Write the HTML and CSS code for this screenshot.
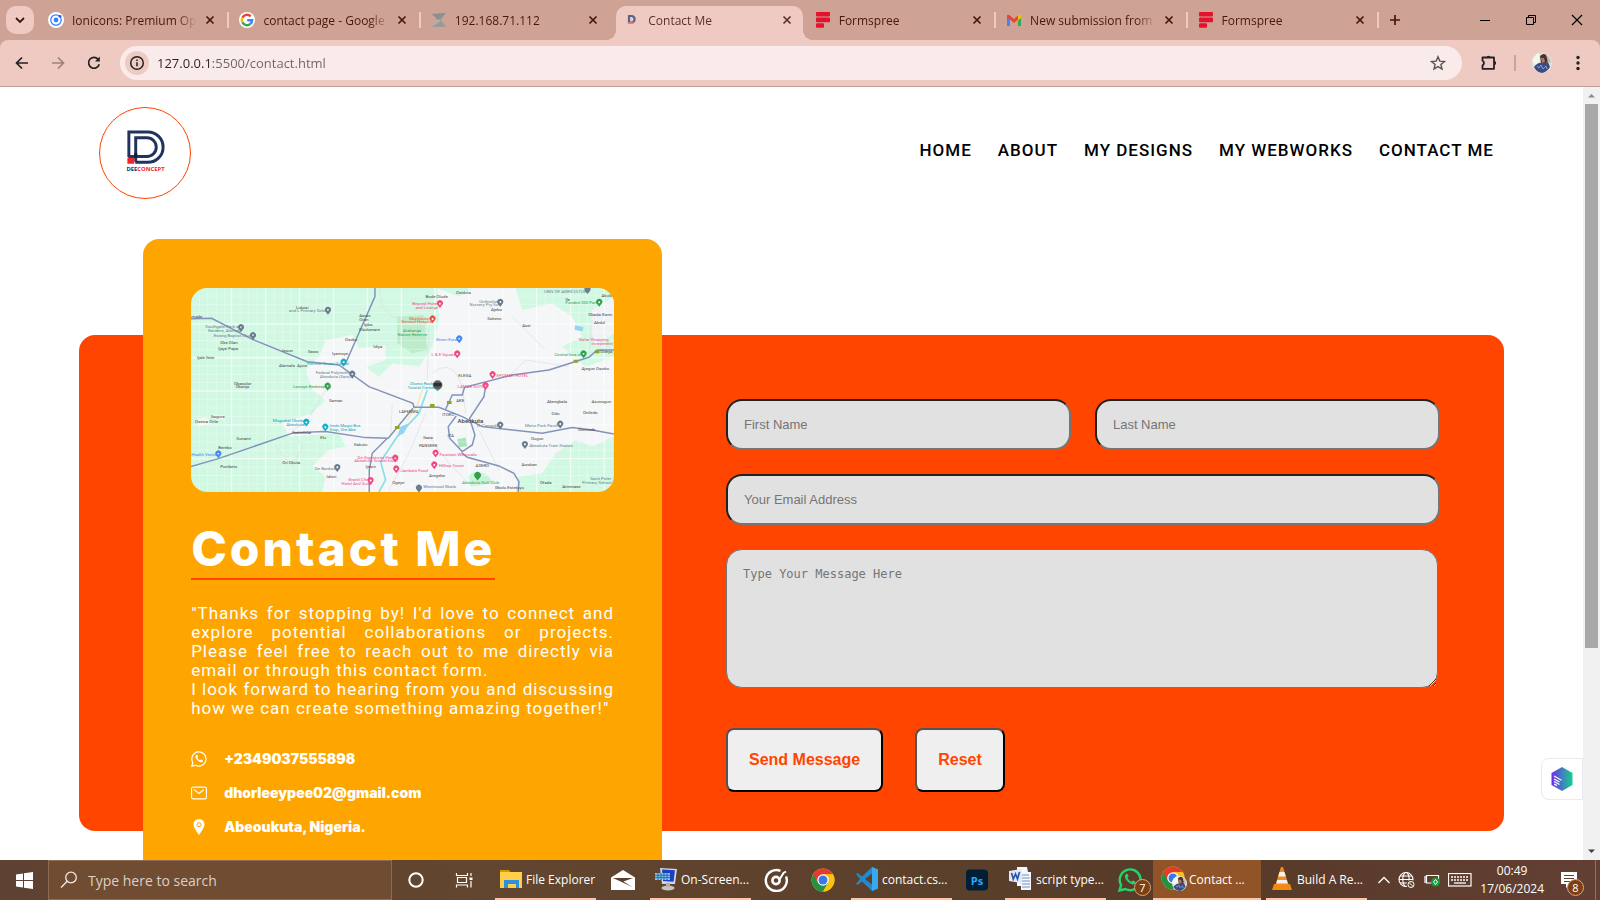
FILE: index.html
```html
<!DOCTYPE html>
<html lang="en">
<head>
<meta charset="utf-8">
<title>Contact Me</title>
<link rel="stylesheet" href="styles.css">
</head>
<body>
<svg class="defs" aria-hidden="true">
  <symbol id="i-x" viewBox="0 0 10 10"><path d="M1.5 1.5l7 7M8.500 1.500l-7 7" stroke="currentColor" stroke-width="1.7" fill="none"/></symbol>
  <symbol id="i-form" viewBox="0 0 16 16"><g fill="#e5122e"><rect x="1" y="0" width="14" height="4.600" rx="1"/><rect x="1" y="5.600" width="14" height="4.600" rx="1"/><rect x="1" y="11.200" width="8" height="4.600" rx="1"/></g></symbol>
  <symbol id="i-chrome" viewBox="0 0 48 48"><circle cx="24" cy="24" r="23" fill="#fbc116"/><path d="M24 24L4.100 12.500A23 23 0 0 1 43.900 12.500H24z" fill="#e33b2e"/><path d="M24 24L4.100 12.500A23 23 0 0 0 24 47L34 30z" fill="#229342"/><path d="M24 12.500H43.900A23 23 0 0 1 24 47L34 30z" fill="#fbc116"/><path d="M4.100 12.500L14 29.700L24 13z" fill="#e33b2e"/><circle cx="24" cy="24" r="11.500" fill="#fff"/><circle cx="24" cy="24" r="9" fill="#3b78e7"/></symbol>
  <symbol id="i-face" viewBox="0 0 20 20"><circle cx="10" cy="10" r="10" fill="#dfe6dc"/><path d="M0 8q2-6 7-8l1 8-5 4z" fill="#f4f7ee"/><path d="M8 3q4-4 7 0l1 5-3 3-4-1z" fill="#4b3030"/><path d="M9 5l3 0 1 4-3 1z" fill="#b07a68"/><path d="M2 14q4-5 9-4l5-1 2 5q-3 5-8 6-6-1-8-6z" fill="#3c4b82"/><path d="M5 13l2 2 2-3 2 4 3-3 1 3" stroke="#8fa0cc" fill="none"/><path d="M14 2q4 2 5 8l-3-1z" fill="#c9b6ae"/></symbol>
</svg>

<header class="chrome">
  <div class="tabstrip">
    <button class="tab-search" aria-label="Search tabs"><svg viewBox="0 0 12 12" width="12" height="12"><path d="M2 4l4 4 4-4" fill="none" stroke="#3a1613" stroke-width="1.800"/></svg></button>
    <div class="tabs">
      <div class="tab"><svg class="fav" viewBox="0 0 16 16"><circle cx="8" cy="8" r="8" fill="#fff"/><circle cx="8" cy="8" r="5.200" fill="none" stroke="#3880ff" stroke-width="1.300"/><circle cx="8" cy="8" r="2.400" fill="#3880ff"/><circle cx="12" cy="4.300" r="1.400" fill="#1c5bff"/></svg><span class="tab-title">Ionicons: Premium Ope</span><button class="tab-close" aria-label="Close tab"><svg><use href="#i-x"/></svg></button></div>
      <div class="tab"><svg class="fav" viewBox="0 0 16 16"><circle cx="8" cy="8" r="8" fill="#fff"/><g fill="none" stroke-width="2.400"><path d="M11.700 4.300A5.200 5.200 0 0 0 3.400 5.600" stroke="#ea4335"/><path d="M3.400 5.600A5.200 5.200 0 0 0 3.400 10.400" stroke="#fbbc05"/><path d="M3.400 10.400A5.200 5.200 0 0 0 11.300 12" stroke="#34a853"/><path d="M11.300 12A5.200 5.200 0 0 0 13.200 8.200H8.200" stroke="#4285f4"/></g></svg><span class="tab-title">contact page - Google</span><button class="tab-close" aria-label="Close tab"><svg><use href="#i-x"/></svg></button></div>
      <div class="tab no-sep"><svg class="fav" viewBox="0 0 16 16"><path d="M1 2l14-1-5 7 5 7-14 0 6-7z" fill="#9b9b9b"/><path d="M1 2l6 6 8-7z" fill="#8a8f90"/><path d="M7 8l-6 7 9-7z" fill="#b5b5b5"/></svg><span class="tab-title">192.168.71.112</span><button class="tab-close" aria-label="Close tab"><svg><use href="#i-x"/></svg></button></div>
      <div class="tab active"><svg class="fav" viewBox="0 0 16 16"><path d="M5 4h3a3.400 3.400 0 0 1 0 6.600H5z" fill="none" stroke="#5b628c" stroke-width="2.200"/><path d="M4 11h6" stroke="#e58a88" stroke-width="1.500"/></svg><span class="tab-title">Contact Me</span><button class="tab-close" aria-label="Close tab"><svg><use href="#i-x"/></svg></button></div>
      <div class="tab"><svg class="fav"><use href="#i-form"/></svg><span class="tab-title">Formspree</span><button class="tab-close" aria-label="Close tab"><svg><use href="#i-x"/></svg></button></div>
      <div class="tab"><svg class="fav" viewBox="0 0 16 16"><path d="M1 4v10h3V6z" fill="#4285f4"/><path d="M15 4v10h-3V6z" fill="#34a853"/><path d="M12 4l3-1.500V6l-3 2.500z" fill="#fbbc04"/><path d="M1 3.500Q2 2 4 3.500L8 7l4-3.500v4L8 11 4 7.500 1 5.500z" fill="#ea4335"/><path d="M12 3.500q2-1.500 3 0v2l-3 2z" fill="#fbbc04"/></svg><span class="tab-title">New submission from</span><button class="tab-close" aria-label="Close tab"><svg><use href="#i-x"/></svg></button></div>
      <div class="tab"><svg class="fav"><use href="#i-form"/></svg><span class="tab-title">Formspree</span><button class="tab-close" aria-label="Close tab"><svg><use href="#i-x"/></svg></button></div>
    </div>
    <button class="new-tab" aria-label="New tab"><svg viewBox="0 0 12 12" width="12" height="12"><path d="M6 1v10M1 6h10" stroke="#4a1511" stroke-width="1.700"/></svg></button>
    <div class="win-buttons">
      <button aria-label="Minimize"><svg viewBox="0 0 12 12" width="12" height="12"><path d="M1 6.500h10" stroke="#000"/></svg></button>
      <button aria-label="Restore"><svg viewBox="0 0 12 12" width="12" height="12"><path d="M1.500 3.500h7v7h-7zM3.500 3.500v-2h7v7h-2" fill="none" stroke="#000"/></svg></button>
      <button aria-label="Close"><svg viewBox="0 0 12 12" width="12" height="12"><path d="M1 1l10 10M11 1L1 11" stroke="#000" stroke-width="1.200"/></svg></button>
    </div>
  </div>
  <div class="toolbar">
    <button class="tool" aria-label="Back"><svg viewBox="0 0 16 16" width="16" height="16"><path d="M14 8H3M8 2.500L2.500 8 8 13.500" fill="none" stroke="#222" stroke-width="1.700"/></svg></button>
    <button class="tool" aria-label="Forward"><svg viewBox="0 0 16 16" width="16" height="16"><path d="M2 8h11M8 2.500L13.500 8 8 13.500" fill="none" stroke="#9c827d" stroke-width="1.700"/></svg></button>
    <button class="tool" aria-label="Reload"><svg viewBox="0 0 16 16" width="16" height="16"><path d="M13.200 9.200A5.400 5.400 0 1 1 12 4.200" fill="none" stroke="#222" stroke-width="1.700"/><path d="M13.800 1.500v5H9z" fill="#222"/></svg></button>
    <div class="omnibox">
      <button class="site-info" aria-label="View site information"><svg viewBox="0 0 16 16" width="16" height="16"><circle cx="8" cy="8" r="6.300" fill="none" stroke="#222" stroke-width="1.500"/><path d="M8 7.200v4M8 4.400v1.600" stroke="#222" stroke-width="1.500"/></svg></button>
      <input class="url" type="text" aria-label="Address" value="127.0.0.1:5500/contact.html">
      <button class="star" aria-label="Bookmark"><svg viewBox="0 0 16 16" width="16" height="16"><path d="M8 1.800l1.800 4.300 4.700.4-3.600 3 1.100 4.600L8 11.600l-4 2.500 1.100-4.600-3.600-3 4.700-.4z" fill="none" stroke="#555" stroke-width="1.400"/></svg></button>
    </div>
    <div class="tool-right">
      <button class="tool" aria-label="Extensions"><svg viewBox="0 0 18 18" width="18" height="18"><path d="M2.500 3.500H14V14.800H2.500V11.500Q5.500 9.200 2.500 6.500z" fill="none" stroke="#222" stroke-width="1.800" stroke-linejoin="round"/><path d="M6.300 3.500a2.300 2.300 0 0 1 4.400 0zM14.500 6.800a2.300 2.300 0 0 1 0 4.400z" fill="#222"/></svg></button>
      <span class="tool-sep"></span>
      <button class="avatar" aria-label="Profile"><svg width="20" height="20"><use href="#i-face"/></svg></button>
      <button class="dots" aria-label="Menu"><svg viewBox="0 0 4 16" width="4" height="16"><g fill="#222"><circle cx="2" cy="2.500" r="1.700"/><circle cx="2" cy="8" r="1.700"/><circle cx="2" cy="13.500" r="1.700"/></g></svg></button>
    </div>
  </div>
</header>

<div class="viewport">
<main class="page">
  <div class="site-header">
    <a class="logo" href="#" aria-label="Deeconcept home"><svg viewBox="0 0 92 92" width="90" height="90">
      <g fill="none" stroke="#21325e" stroke-width="3"><path d="M29.500 50V24.500H49a14.500 14.500 0 0 1 0 31H36"/><path d="M36.500 55V30.500H48a9.500 9.500 0 0 1 0 19H29"/></g>
      <path d="M28 51h7v6h-7z" fill="#f4232b"/><path d="M35 46h3v5h-3z" fill="#131a30"/>
      <text x="27" y="64" class="logo-text"><tspan fill="#21325e">DEE</tspan><tspan fill="#f4232b">CONCEPT</tspan></text></svg></a>
    <nav class="nav"><a href="#">HOME</a><a href="#">ABOUT</a><a href="#">MY DESIGNS</a><a href="#">MY WEBWORKS</a><a href="#">CONTACT ME</a></nav>
  </div>

  <section class="contact">
    <div class="panel"></div>
    <article class="card">
      <svg class="map" viewBox="36 24 1269 612" preserveAspectRatio="xMidYMid slice" role="img" aria-label="Map of Abeokuta">
        <rect x="36" y="24" width="1269" height="612" fill="#d0f8e2"/>
        <path d="M775 24L840 50 880 24H1010L1030 90 1120 70 1180 110 1210 170 1150 200 1220 260 1305 230V470L1240 500 1190 480 1130 520 1090 580 1020 590 1010 636H430L440 590 400 560 450 510 500 500 480 460 330 470 310 430 400 400 440 360 400 330 380 270 420 230 440 180 520 165 540 205 620 195 620 240 560 260 600 290 640 250 720 260 760 200 780 120z" fill="#f5f6f7"/>
        <path d="M1240 90L1305 50V160L1250 200 1235 150z" fill="#f0f3f5"/>
        <path d="M50 420l30-10 20 20-40 10zM100 405l30 0 10 12-30 4z" fill="#f0f6f4"/>
        <path d="M655 110L735 105 745 210 700 220 655 190z" fill="#bdeccb"/>
        <path d="M865 590q20-25 60-5l20 25-70 10z" fill="#c9f3d9"/><path d="M835 478l25-5 5 25-25 5z" fill="#a8e5bd"/>
        <g stroke="#fff" fill="none" opacity=".65"><path d="M36 132H1305M36 233H1305M36 333H1305M36 435H1305M36 536H1305M158 24V636M260 24V636M362 24V636M464 24V636M565 24V636M667 24V636M768 24V636M870 24V636M971 24V636M1073 24V636M1175 24V636M1276 24V636" stroke-width="4"/><path d="M36 48H1305M36 73H1305M36 98H1305M36 157H1305M36 182H1305M36 208H1305M36 258H1305M36 283H1305M36 308H1305M36 358H1305M36 384H1305M36 410H1305M36 460H1305M36 486H1305M36 511H1305M36 561H1305M36 587H1305M36 612H1305M61 24V636M86 24V636M112 24V636M137 24V636M183 24V636M208 24V636M234 24V636M285 24V636M311 24V636M336 24V636M387 24V636M413 24V636M438 24V636M1099 24V636M1124 24V636M1200 24V636M1226 24V636M1251 24V636" stroke-width="1.500"/><path d="M36 233H1305M768 24V636" stroke-width="5"/></g>
        <g fill="none" stroke="#d9dfe5" stroke-width="2"><path d="M600 24L610 80 640 110 700 120 750 150 745 300M760 280q60-50 90 40l10 80M740 400l-50 120-60 110M750 470l60 80 60 60M640 370l-5 100M980 300l60-60 130 20M440 330L380 430M290 500l50 60 30-60-30-50 60-30"/><path d="M1240 120l-10 100M900 450l60 120M1000 110l100 100"/></g>
        <path d="M745 330L720 400 655 470 605 545 620 600 600 636" fill="none" stroke="#86dfe9" stroke-width="5"/><path d="M665 440l25-10-15 30-20 10zM1188 136l26 6-4 12-22-4z" fill="#92d5f1"/>
        <path d="M730 330l-15 45-30 45" fill="none" stroke="#f3e7b6" stroke-width="4"/>
        <g fill="none" stroke="#8493b9" stroke-width="4.500"><path d="M36 116L98 115 220 178 385 245 480 255 570 320 702 370 705 382 780 382 850 410 910 440 1090 460 1180 443 1240 450 1305 462"/><path d="M588 24V50L500 250"/><path d="M36 560L118 536 345 458 440 455 560 473 628 475 702 385"/><path d="M625 475L580 520 571 570V636"/><path d="M800 388L820 345H850L857 322 1000 285 1110 270 1230 232 1255 210H1305"/><path d="M920 320L915 350 872 415 888 465 880 495 850 515 812 475 808 440 832 408"/><path d="M848 518L865 532 960 558 1005 580 1020 605 1018 636"/></g>
        <g fill="#93a51f"><path d="M753 372h14v9h-14zM804 363h14v9h-14zM648 438h14v9h-14zM1184 239h14v9h-14zM1248 211h14v9h-14z"/></g>
        <g class="pins">
          <g fill="#6b7c8c"><path id="pin" d="M447 104l-7-9a9 9 0 1 1 14 0z"/><use href="#pin" x="-261" y="52"/><use href="#pin" x="-225" y="76"/><use href="#pin" x="73" y="192"/><use href="#pin" x="517" y="-24"/><use href="#pin" x="517" y="345"/><use href="#pin" x="697" y="342"/><use href="#pin" x="591" y="403"/><use href="#pin" x="28" y="472"/><use href="#pin" x="273" y="534"/><use href="#pin" x="779" y="-62"/></g>
          <g fill="#ee4b83"><path d="M783 84l-7-9a9 9 0 1 1 14 0zM835 235l-7-9a9 9 0 1 1 14 0zM941 297l-7-9a9 9 0 1 1 14 0zM920 330l-7-9a9 9 0 1 1 14 0zM770 533l-7-9a9 9 0 1 1 14 0zM766 568l-7-9a9 9 0 1 1 14 0zM649 548l-7-9a9 9 0 1 1 14 0zM652 580l-7-9a9 9 0 1 1 14 0zM575 615l-7-9a9 9 0 1 1 14 0z"/></g>
          <path d="M761 130l-7-9a9 9 0 1 1 14 0z" fill="#f0524b"/>
          <path d="M841 190l-7-9a9 9 0 1 1 14 0zM118 535l-7-9a9 9 0 1 1 14 0z" fill="#4285f4"/>
          <path d="M494 260l-7-9a9 9 0 1 1 14 0zM382 440l-7-9a9 9 0 1 1 14 0zM439 455l-7-9a9 9 0 1 1 14 0zM776 334l-14-12h28z" fill="#16b0c4"/>
          <path d="M446 332l-7-9a9 9 0 1 1 14 0zM1261 80l-7-9a9 9 0 1 1 14 0zM1214 235l-7-9a9 9 0 1 1 14 0zM896 602l-8-10a10 10 0 1 1 16 0z" fill="#34a04f"/>
          <circle cx="776" cy="315" r="14" fill="#5c5a58" stroke="#9fb5b5" stroke-width="2"/><path d="M764 309h24v10h-24z" fill="#2f2d2d"/>
          <g fill="#fff"><circle cx="447" cy="90" r="3"/><circle cx="186" cy="142" r="3"/><circle cx="222" cy="166" r="3"/><circle cx="520" cy="282" r="3"/><circle cx="964" cy="66" r="3"/><circle cx="964" cy="435" r="3"/><circle cx="1144" cy="432" r="3"/><circle cx="1038" cy="493" r="3"/><circle cx="475" cy="562" r="3"/><circle cx="783" cy="71" r="3"/><circle cx="761" cy="117" r="3"/><circle cx="841" cy="177" r="3"/><circle cx="835" cy="222" r="3"/><circle cx="941" cy="284" r="3"/><circle cx="920" cy="317" r="3"/><circle cx="494" cy="247" r="3"/><circle cx="446" cy="319" r="3"/><circle cx="382" cy="427" r="3"/><circle cx="439" cy="442" r="3"/><circle cx="118" cy="522" r="3"/><circle cx="770" cy="520" r="3"/><circle cx="766" cy="555" r="3"/><circle cx="649" cy="535" r="3"/><circle cx="652" cy="567" r="3"/><circle cx="575" cy="602" r="3"/><circle cx="1261" cy="67" r="3"/><circle cx="1214" cy="222" r="3"/></g>
        </g>
        <g class="map-text">
          <text x="351" y="86">Lukosi</text><text x="541" y="110">Aaran</text><text x="541" y="123">Oran</text><text x="555" y="139">Igbo</text><text x="541" y="152">Elodumare</text><text x="498" y="183">Osoku</text><text x="583" y="203">Idiya</text><text x="124" y="192">Oke Olan</text><text x="118" y="211">Ijaye Papa</text><text x="54" y="238">Ijale Ilete</text><text x="37" y="113">made</text><text x="310" y="217">Isoun</text><text x="387" y="218">Ilawo</text><text x="459" y="226">Iyamoye</text><text x="300" y="262">Alamala&#160; Ajura</text><text x="165" y="314">Obasolor</text><text x="170" y="325">Obanja</text><text x="450" y="366">Saman</text><text x="96" y="413">Itagura</text><text x="48" y="429">Osewa Orile</text><text x="172" y="480">Sunami</text><text x="118" y="508">Bereko</text><text x="340" y="461">Ibatedelar</text><text x="424" y="477">Elu</text><text x="525" y="497">Ifakutu</text><text x="124" y="563">Poniketu</text><text x="310" y="553">Ori Okuta</text><text x="443" y="594">Idiori</text><text x="740" y="55">Bode Olude</text><text x="831" y="43">Osiduta</text><text x="936" y="94">Ajebo</text><text x="925" y="119">Sokenu</text><text x="1030" y="141">Asei</text><text x="1228" y="108">Obada Gomi</text><text x="1245" y="131">Abdul</text><text x="1268" y="50">Akule</text><text x="1160" y="62">Ile</text><text x="1208" y="270">Ajegun Osotto</text><text x="1104" y="369">Akeegbala</text><text x="1238" y="368">Asunogun</text><text x="1118" y="405">Odo</text><text x="1212" y="401">Oniledo</text><text x="1197" y="453">Olomode</text><text x="1056" y="481">Ougun</text><text x="1028" y="557">Awokan</text><text x="1083" y="613">Ofada</text><text x="1150" y="625">Arinmase</text><text x="948" y="627">Gbolu Estetuyu</text><text x="750" y="592">Aregebe</text><text x="640" y="613">Ogeyn</text><text x="560" y="565">Ijesin</text><text x="733" y="478">Ibara</text><text x="720" y="500">PANSEKE</text><text x="660" y="398">LAFENWA</text><text x="790" y="407">ITOKU</text><text x="832" y="367">AKE</text><text x="838" y="290">ELEGA</text><text x="890" y="560">ASERO</text><text x="806" y="472">ITA</text><text x="1264" y="219">Odeya</text>
          <text x="836" y="429" class="city">Abeokuta</text>
          <g fill="#6b7c8c"><text x="330" y="97">and L Primary School</text><text x="79" y="143">Southgate Park and</text><text x="86" y="155">Gardens, Alamala</text><text x="104" y="170">Ewang Baptist Church</text><text x="410" y="281">Federal Polytechnic</text><text x="422" y="293">Abeokuta (Ilaro)</text><text x="901" y="68">Unfinished</text><text x="872" y="79">Nursery Pry Sch</text><text x="894" y="442">O. Campdila</text><text x="1038" y="440">Metro Park Pacific</text><text x="1051" y="500">Abeokuta Train Station</text><text x="408" y="570">De Banksia</text><text x="733" y="625">Westwood Gbala</text><text x="1234" y="600">Saint Peter</text><text x="1210" y="611">Primary School</text><text x="1095" y="38">UNIV OF AGRICULTURE</text></g>
          <g fill="#ee4b83"><text x="700" y="75">Beyond Hotel</text><text x="710" y="86">and Lounge</text><text x="758" y="228">L &amp; E Square</text><text x="953" y="290">EPOMAK HOTEL</text><text x="836" y="323">LAMAR SUITES</text><text x="782" y="528">Fountain Wuruwala</text><text x="780" y="561">Hilltop Tower</text><text x="536" y="536">De-Signatures Hotel</text><text x="526" y="547">Abeokuta Sunset hotel</text><text x="664" y="575">Jambalo Food</text><text x="508" y="602">Grand Chin</text><text x="488" y="614">Hotel And Suite</text><text x="1200" y="184">Gafar Shopping</text><text x="1238" y="196">investment</text></g>
          <g fill="#f0524b"><text x="690" y="119">Gbalelodory</text><text x="667" y="130">General Hospital</text></g>
          <g fill="#4285f4"><text x="771" y="184">Green Estate</text><text x="37" y="529">Health Venture</text></g>
          <g fill="#169fb2"><text x="384" y="254">Premier Smart School</text><text x="693" y="315">Olumo Rock</text><text x="686" y="327">Tourist Center</text><text x="281" y="426">Mogodial Obelenu</text><text x="322" y="437">Abeokuta</text><text x="452" y="441">Irede Magic Bus</text><text x="452" y="453">Stop, Ore-Abe</text></g>
          <g fill="#34a04f"><text x="342" y="325">Lawoye Beekeeping</text><text x="1160" y="73">Funded 200 Park</text><text x="1127" y="228">Central bus stop</text><text x="849" y="613">Abeokuta Golf Club</text><text x="672" y="156">Arakanga</text><text x="656" y="167">Nature Reserve</text></g>
        </g>
      </svg>
      <h1>Contact Me</h1>
      <p class="intro">"Thanks for stopping by! I'd love to connect and explore potential collaborations or projects. Please feel free to reach out to me directly via email or through this contact form.<br>I look forward to hearing from you and discussing how we can create something amazing together!"</p>
      <ul class="details">
        <li><svg viewBox="0 0 16 16" width="16" height="16"><path d="M.8 15.200l1-3.700A7.100 7.100 0 1 1 4.600 14.200z" fill="none" stroke="#fff" stroke-width="1.200"/><path d="M5.300 4c-1.500 1-.8 3.200 1.200 5.200s4.300 2.800 5.200 1.200c.3-.6.200-1-.1-1.200l-1.400-.7c-.6-.2-.9 1-1.400.8-1.200-.5-2-1.300-2.500-2.500-.1-.5.900-.8.700-1.400L6.300 4c-.2-.3-.7-.2-1 0z" fill="#fff"/></svg>+2349037555898</li>
        <li><svg viewBox="0 0 16 16" width="16" height="16"><rect x=".6" y="2.100" width="14.800" height="11.800" rx="1.500" fill="none" stroke="#fff" stroke-width="1.100"/><path d="M3 4.500l5 4 5-4" fill="none" stroke="#fff" stroke-width="1.100"/></svg>dhorleeypee02@gmail.com</li>
        <li><svg viewBox="0 0 16 16" width="16" height="16"><path d="M8 0a5.500 5.500 0 0 0-5.500 5.500C2.500 9 8 16 8 16s5.500-7 5.500-10.500A5.500 5.500 0 0 0 8 0z" fill="#fff"/><circle cx="8" cy="5.700" r="2" fill="none" stroke="#ffa500"/></svg>Abeoukuta, Nigeria.</li>
      </ul>
    </article>
    <form class="form">
      <input type="text" placeholder="First Name" aria-label="First Name">
      <input type="text" placeholder="Last Name" aria-label="Last Name">
      <input class="wide" type="email" placeholder="Your Email Address" aria-label="Your Email Address">
      <textarea class="wide" placeholder="Type Your Message Here" aria-label="Type Your Message Here"></textarea>
      <div class="actions wide"><button type="submit">Send Message</button><button type="reset">Reset</button></div>
    </form>
  </section>
  <button class="widget" aria-label="Open assistant"><svg viewBox="0 0 22 24" width="22" height="24"><defs><linearGradient id="hex"><stop offset="0" stop-color="#6d2df0"/><stop offset="1" stop-color="#15d08c"/></linearGradient></defs><path d="M11 0l10.500 6v12L11 24 .5 18V6z" fill="url(#hex)"/><path d="M3 9l7.500 4.300M3 12l5.500 3M3 14.500l5.500 3M3 17l3 1.600" stroke="#fff" stroke-width="1.200"/></svg></button>
</main>
<div class="scrollbar" aria-hidden="true"><svg viewBox="0 0 17 17" width="17" height="17"><path d="M5 10.500h7L8.500 7z" fill="#8b8b8b"/></svg><span class="thumb"></span><svg viewBox="0 0 17 17" width="17" height="17"><path d="M5 6.500h7L8.500 10z" fill="#404040"/></svg></div>
</div>

<footer class="taskbar">
  <button class="tb start" aria-label="Start"><svg viewBox="0 0 17 17" width="17" height="17"><path d="M0 2.400l7-1V8H0zM8 1.200L17 0v8H8zM0 9h7v6.600l-7-1zM8 9h9v8l-9-1.300z" fill="#fff"/></svg></button>
  <label class="search"><svg viewBox="0 0 18 18" width="18" height="18"><circle cx="11" cy="6.500" r="5.300" fill="none" stroke="#f0e8e2" stroke-width="1.300"/><path d="M7.200 10.300L1 16.500" stroke="#f0e8e2" stroke-width="1.400"/></svg><input type="text" placeholder="Type here to search" aria-label="Type here to search"></label>
  <button class="tb start" aria-label="Cortana"><svg viewBox="0 0 16 16" width="16" height="16"><circle cx="8" cy="8" r="6.700" fill="none" stroke="#fff" stroke-width="2"/></svg></button>
  <button class="tb start task-view" aria-label="Task View"><svg viewBox="0 0 18 16" width="18" height="16"><path d="M1.500 1v2.500h11V1M1.500 15.500V13h11v2.500M2.500 5.500h9v5h-9zM16 1v3M16 9v6.500" fill="none" stroke="#fff" stroke-width="1.200"/><path d="M14.500 5.500h3v2.500h-3z" fill="#fff"/></svg></button>
  <button class="tb app explorer"><svg viewBox="0 0 24 24"><path d="M1 3h9l2 3H1z" fill="#d99a00"/><path d="M1 5h22v16H1z" fill="#ffcf4a"/><path d="M5 21v-8h15v8h-3v-4h-8v4z" fill="#2f8fdc"/></svg>File Explorer</button>
  <button class="tb icon" aria-label="Mail"><svg viewBox="0 0 24 24"><path d="M12 2l12 7.500V22H0V9.500z" fill="#fff"/><path d="M2 10h20l-9.500 3.500 9 5.500z" fill="#5c402c"/></svg></button>
  <button class="tb app"><svg viewBox="0 0 24 24"><path d="M6 1l17 1-2 15H8z" fill="#cfd6e4"/><path d="M8 2.500l13 .8-1.500 11.500L9 14z" fill="#1b3fc4"/><path d="M1 6h15v7H1z" fill="#7fc3ee"/><path d="M1 8.300h15M1 10.600h15M4 6v7M7 6v7M10 6v7M13 6v7" stroke="#2b6db3"/><ellipse cx="14" cy="21" rx="6.500" ry="2.500" fill="#c8c4be"/><path d="M12 16h4v4h-4z" fill="#b3b0ac"/></svg>On-Screen...</button>
  <button class="tb icon" aria-label="Groove"><svg viewBox="0 0 24 24"><path d="M16.500 2.900A10.500 10.500 0 1 0 22 8.500" fill="none" stroke="#fff" stroke-width="2.400"/><circle cx="12" cy="12.500" r="3.600" fill="none" stroke="#fff" stroke-width="2.600"/><path d="M15.200 12L19.500 5l2.500-1.500" fill="none" stroke="#fff" stroke-width="2"/></svg></button>
  <button class="tb icon browser" aria-label="Chrome"><svg><use href="#i-chrome"/></svg></button>
  <button class="tb app"><svg viewBox="0 0 24 24"><path d="M17 0l6 2.500v19L17 24 7 14.500 2.500 18 1 17l4-5-4-5 1.500-1L7 9.500z" fill="#2489ca"/><path d="M17 6.500v11L10 12z" fill="#5c402c"/><path d="M17 0l6 2.500v19L17 24z" fill="#3ba7ee"/></svg>contact.cs...</button>
  <button class="tb icon photoshop" aria-label="Photoshop"><svg viewBox="0 0 24 24"><rect x="1" y="1.500" width="22" height="21" rx="4" fill="#001e36"/><text x="12" y="16.500" class="ps">Ps</text></svg></button>
  <button class="tb app"><svg viewBox="0 0 24 24"><path d="M8 0h10l1 5h3v18H12v-4H8z" fill="#f4f7fb"/><path d="M12 8h8M12 11h9M12 14h9M13 17h8M13 20h8" stroke="#7190c3"/><path d="M0 4l13-2v14L0 14z" fill="#dfe9f7"/><path d="M2.500 6l1.800 6L6.500 7l2 5 2-7" fill="none" stroke="#2a57a8" stroke-width="1.700"/></svg>script type...</button>
  <button class="tb icon badge-host whatsapp" aria-label="WhatsApp"><svg viewBox="0 0 24 24"><path d="M1.500 22.500l1.600-5.500A10.400 10.400 0 1 1 7.200 21z" fill="none" stroke="#25d366" stroke-width="2.400"/><path d="M8 6c-2.200 1.500-1 4.800 1.700 7.500s6.200 4 7.600 1.700c.4-.9.200-1.300-.2-1.600l-2-1c-.9-.3-1.200 1.300-2 1-1.700-.7-2.800-1.900-3.500-3.500-.2-.7 1.200-1.200 1-2L9.500 6c-.3-.4-1-.3-1.500 0z" fill="#25d366"/></svg><span class="badge">7</span></button>
  <button class="tb app current"><svg viewBox="0 0 26 26"><use href="#i-chrome" width="24" height="24"/><use href="#i-face" x="11" y="10" width="15" height="15"/></svg>Contact ...</button>
  <button class="tb app vlc"><svg viewBox="0 0 24 24"><path d="M4 17h16l2 6H2z" fill="#f08a10"/><path d="M11 0h2l5.500 18q-6.500 3-13 0z" fill="#f58b1a"/><path d="M9.500 5h5l1.300 4.500H8.200zM7.200 13h9.600l1 3.500H6.200z" fill="#f4f1ee"/></svg>Build A Re...</button>
  <div class="tray">
    <button aria-label="Show hidden icons"><svg viewBox="0 0 12 8" width="12" height="8"><path d="M.5 7L6 1.500 11.500 7" fill="none" stroke="#fff" stroke-width="1.300"/></svg></button>
    <button aria-label="Network"><svg viewBox="0 0 18 18" width="18" height="18"><g fill="none" stroke="#fff" stroke-width="1.100"><circle cx="8" cy="8.500" r="7"/><ellipse cx="8" cy="8.500" rx="3.200" ry="7"/><path d="M1 8.500h14M2 5h12M2 12h8"/></g><circle cx="13" cy="13.500" r="4.500" fill="#5c402c"/><circle cx="13" cy="13.500" r="3" fill="none" stroke="#fff"/><path d="M11 11.500l4 4" stroke="#fff"/></svg></button>
    <button aria-label="Battery"><svg viewBox="0 0 16 14" width="16" height="14"><path d="M1 3v7M2.500 2.500h12v7.500h-12z" fill="none" stroke="#fff" stroke-width="1.200"/><circle cx="11.500" cy="9" r="4.500" fill="#159a3c"/><path d="M11.500 6.500l2 2.500-2 2.500-2-2.500z" fill="none" stroke="#fff"/></svg></button>
    <button aria-label="Touch keyboard"><svg viewBox="0 0 24 14" width="24" height="14"><rect x=".5" y=".5" width="22.500" height="12.500" fill="none" stroke="#fff" stroke-width="1.200"/><path d="M3 4h18M3 7h18" stroke="#fff" stroke-width="1.300" stroke-dasharray="2 1"/><path d="M6 10h12" stroke="#fff" stroke-width="1.300"/></svg></button>
    <button class="clock"><span>00:49</span><span>17/06/2024</span></button>
    <button class="badge-host notify" aria-label="Notifications"><svg viewBox="0 0 18 18" width="18" height="18"><path d="M1 1h16v12h-7l-4 4v-4H1z" fill="#fff"/><path d="M4 4.500h10M4 7.500h10M4 10.500h7" stroke="#5f4232"/></svg><span class="badge">8</span></button>
    <span class="peek"></span>
  </div>
</footer>
</body>
</html>
```
FILE: styles.css
```css
* { box-sizing: border-box; }
html, body { height: 100%; }
body {
  margin: 0;
  display: flex;
  flex-direction: column;
  overflow: hidden;
  background: #fff;
  font-family: "Open Sans", "Noto Sans", sans-serif;
}
button { padding: 0; border: 0; background: none; font: inherit; color: inherit; }
.defs { position: absolute; width: 0; height: 0; }

/* browser frame */
.chrome { background: #cea396; border-bottom: 1px solid #bd9f99; color: #4a1511; }
.tabstrip { display: flex; align-items: center; height: 40px; padding-left: 6px; font-size: 12px; }
.tab-search { display: grid; place-items: center; width: 28px; height: 28px; margin-right: 4px; border-radius: 10px; background: #efcac2; }
.tabs { flex: 1; display: flex; align-self: stretch; }
.tab { position: relative; flex: 1 1 0; min-width: 0; display: flex; align-items: center; gap: 8px; margin-top: 6px; padding: 0 14px 6px 10px; }
.tab::after { content: ""; position: absolute; right: 0; top: 6px; width: 2px; height: 16px; background: #efcac2; }
.tab.no-sep::after { display: none; }
.fav { flex: none; width: 16px; height: 16px; }
.tab-title { flex: 1; overflow: hidden; white-space: nowrap; -webkit-mask-image: linear-gradient(to left, transparent, #000 20px); mask-image: linear-gradient(to left, transparent, #000 20px); }
.tab-close { flex: none; display: grid; place-items: center; width: 10px; height: 10px; }
.tab-close svg { width: 10px; height: 10px; }
.tab.active { margin-left: 4px; margin-right: 2px; padding-left: 8px; padding-right: 11px; border-radius: 10px 10px 0 0; background: #efcac2; color: #5c302b; }
.tab.active::before, .tab.active::after { content: ""; position: absolute; top: auto; bottom: 0; width: 10px; height: 10px; }
.tab.active::before { left: -10px; background: radial-gradient(circle at 0 0, transparent 10px, #efcac2 10px); }
.tab.active::after { right: -10px; background: radial-gradient(circle at 100% 0, transparent 10px, #efcac2 10px); }
.new-tab { display: grid; place-items: center; width: 32px; }
.win-buttons { display: flex; margin-left: 51px; }
.win-buttons button { display: grid; place-items: center; width: 46px; height: 40px; }

.toolbar { display: flex; align-items: center; height: 46px; padding: 0 4px; background: #efcac2; border-radius: 8px 8px 0 0; }
.tool { display: grid; place-items: center; width: 36px; height: 34px; }
.omnibox { flex: 1; display: flex; align-items: center; gap: 8px; height: 34px; margin-left: 8px; padding: 0 16px 0 5px; border-radius: 17px; background: #f9ebe9; }
.site-info { display: grid; place-items: center; width: 24px; height: 24px; border-radius: 50%; background: #efcac2; }
.url { flex: 1; border: 0; padding: 0; font: 13px "Open Sans", "Noto Sans", sans-serif; color: transparent; background: linear-gradient(90deg, #2a2124 56px, #6e6364 56px); -webkit-background-clip: text; background-clip: text; }
.star { display: grid; place-items: center; width: 16px; }
.tool-right { display: flex; align-items: center; width: 134px; padding-left: 9px; }
.tool-sep { width: 2px; height: 16px; margin-left: 7px; background: #cea396; }
.avatar { display: grid; margin-left: 16px; }
.dots { display: grid; margin-left: 24px; }

/* page */
.viewport { flex: 1; min-height: 0; display: flex; }
.page { position: relative; flex: 1; min-width: 0; overflow: hidden; }
.scrollbar { display: flex; flex-direction: column; align-items: center; width: 17px; background: #f1f1f1; }
.scrollbar .thumb { width: 13px; flex: 0 0 544px; margin-bottom: auto; background: #a8a8a8; }

.site-header { display: flex; align-items: center; justify-content: space-between; margin: 0 5%; padding: 20px 10px 0 20px; }
.logo { display: grid; border: 1px solid #ff4500; border-radius: 50%; }
.logo-text { font: bold 6px "Open Sans", sans-serif; }
.nav { display: flex; gap: 26px; padding-bottom: 6px; font: 500 17px/20px Roboto, sans-serif; letter-spacing: 1px; }
.nav a { color: #000; text-decoration: none; }

.contact { display: grid; grid-template-columns: 64px 519fr 64px 714fr 64px; grid-template-rows: auto 1fr; margin: 40px 5% 0; }
.panel { grid-area: 1 / 1 / 2 / -1; margin-top: 96px; border-radius: 16px; background: #ff4500; }
.card { grid-area: 1 / 2 / 3 / 3; padding: 49px 48px 64px; border-radius: 16px; background: #ffa500; color: #fff; }
.map { display: block; width: 100%; border-radius: 16px; }
.map-text { font: 13px Roboto, sans-serif; fill: #444; }
.map-text .city { font-size: 18px; font-weight: 500; }
.card h1 { width: fit-content; margin: 28px 0 24px; border-bottom: 2px solid #ff4500; font: 800 48px/58px Inter, Roboto, sans-serif; letter-spacing: 3px; }
.intro { margin: 0 0 24px; font: 17px/19px Roboto, sans-serif; letter-spacing: 1px; text-align: justify; }
.details { margin: 0; padding: 0; list-style: none; font: 900 14px/34px Inter, Roboto, sans-serif; }
.details li { display: flex; align-items: center; gap: 17px; }

.form { grid-area: 1 / 4 / 2 / 5; display: grid; grid-template-columns: 1fr 1fr; gap: 24px; padding: 160px 0 39px; }
.wide { grid-column: 1 / -1; }
.form input, .form textarea { min-width: 0; margin: 0; padding: 16px; border-radius: 16px; background: #e1e1e1; font: 13px "Liberation Sans", sans-serif; }
.form input { height: 51px; border: 2px inset #767676; }
.form textarea { height: 139px; margin-right: 2px; border: 1px solid #767676; font: 12px/16px "DejaVu Sans Mono", monospace; }
.form ::placeholder { color: #757575; opacity: 1; }
.actions { display: flex; gap: 32px; padding-top: 16px; }
.actions button { height: 64px; padding: 0 21px; border: 2px outset #000; border-radius: 8px; background: #efefef; color: #ff4500; font: bold 16px "Liberation Sans", sans-serif; }
.widget { position: absolute; right: 0; bottom: 60px; display: grid; place-items: center; width: 42px; height: 42px; border: 1px solid #e9e9ee; border-radius: 8px 0 0 8px; background: #fff; }

/* taskbar */
.taskbar { display: flex; height: 40px; background: linear-gradient(90deg, #5f4132, #63462f 30%, #5a3f2b 60%, #573a28 75%, #623f33); color: #fff; font-size: 12px; }
.tb { flex: none; display: flex; align-items: center; }
.start { width: 48px; justify-content: center; }
.search { width: 344px; display: flex; align-items: center; gap: 10px; padding-left: 11px; border: 1px solid #8d6d55; background: #704c32; }
.search input { flex: 1; min-width: 0; border: 0; padding: 0; background: none; font: 14px "Open Sans", "Noto Sans", sans-serif; color: #fff; }
.search input::placeholder { color: #dccfc6; opacity: 1; }
.task-view { margin-right: 7px; }
.tb svg { flex: none; }
.app { width: 101px; gap: 3px; padding-left: 4px; border-bottom: 2px solid #ffc6a6; white-space: nowrap; }
.app svg, .icon svg { width: 24px; height: 24px; }
.icon { width: 50px; justify-content: center; }
.explorer + .icon { width: 54px; }
.browser { padding-right: 6px; }
.photoshop { width: 53px; padding-right: 4px; }
.whatsapp { width: 47px; }
.current { width: 108px; padding-left: 8px; gap: 2px; background: #915428; }
.current svg { width: 26px; height: 26px; }
.vlc { margin-left: 5px; }
.badge-host { position: relative; }
.badge { position: absolute; right: 2px; bottom: 4px; width: 17px; height: 17px; border: 1px solid #d5a98a; border-radius: 50%; background: #7e3f10; font: 11px/15px "Open Sans", sans-serif; text-align: center; }
.ps { font: bold 11px "Open Sans", sans-serif; fill: #31a8ff; text-anchor: middle; }
.tray { flex: 1; display: flex; align-items: center; justify-content: flex-end; gap: 8px; }
.tray button { display: grid; place-items: center; }
.clock { line-height: 18px; }
.notify { align-self: stretch; width: 34px; margin-right: 1px; }
.peek { align-self: stretch; width: 5px; border-left: 1px solid #8d7468; }
```
